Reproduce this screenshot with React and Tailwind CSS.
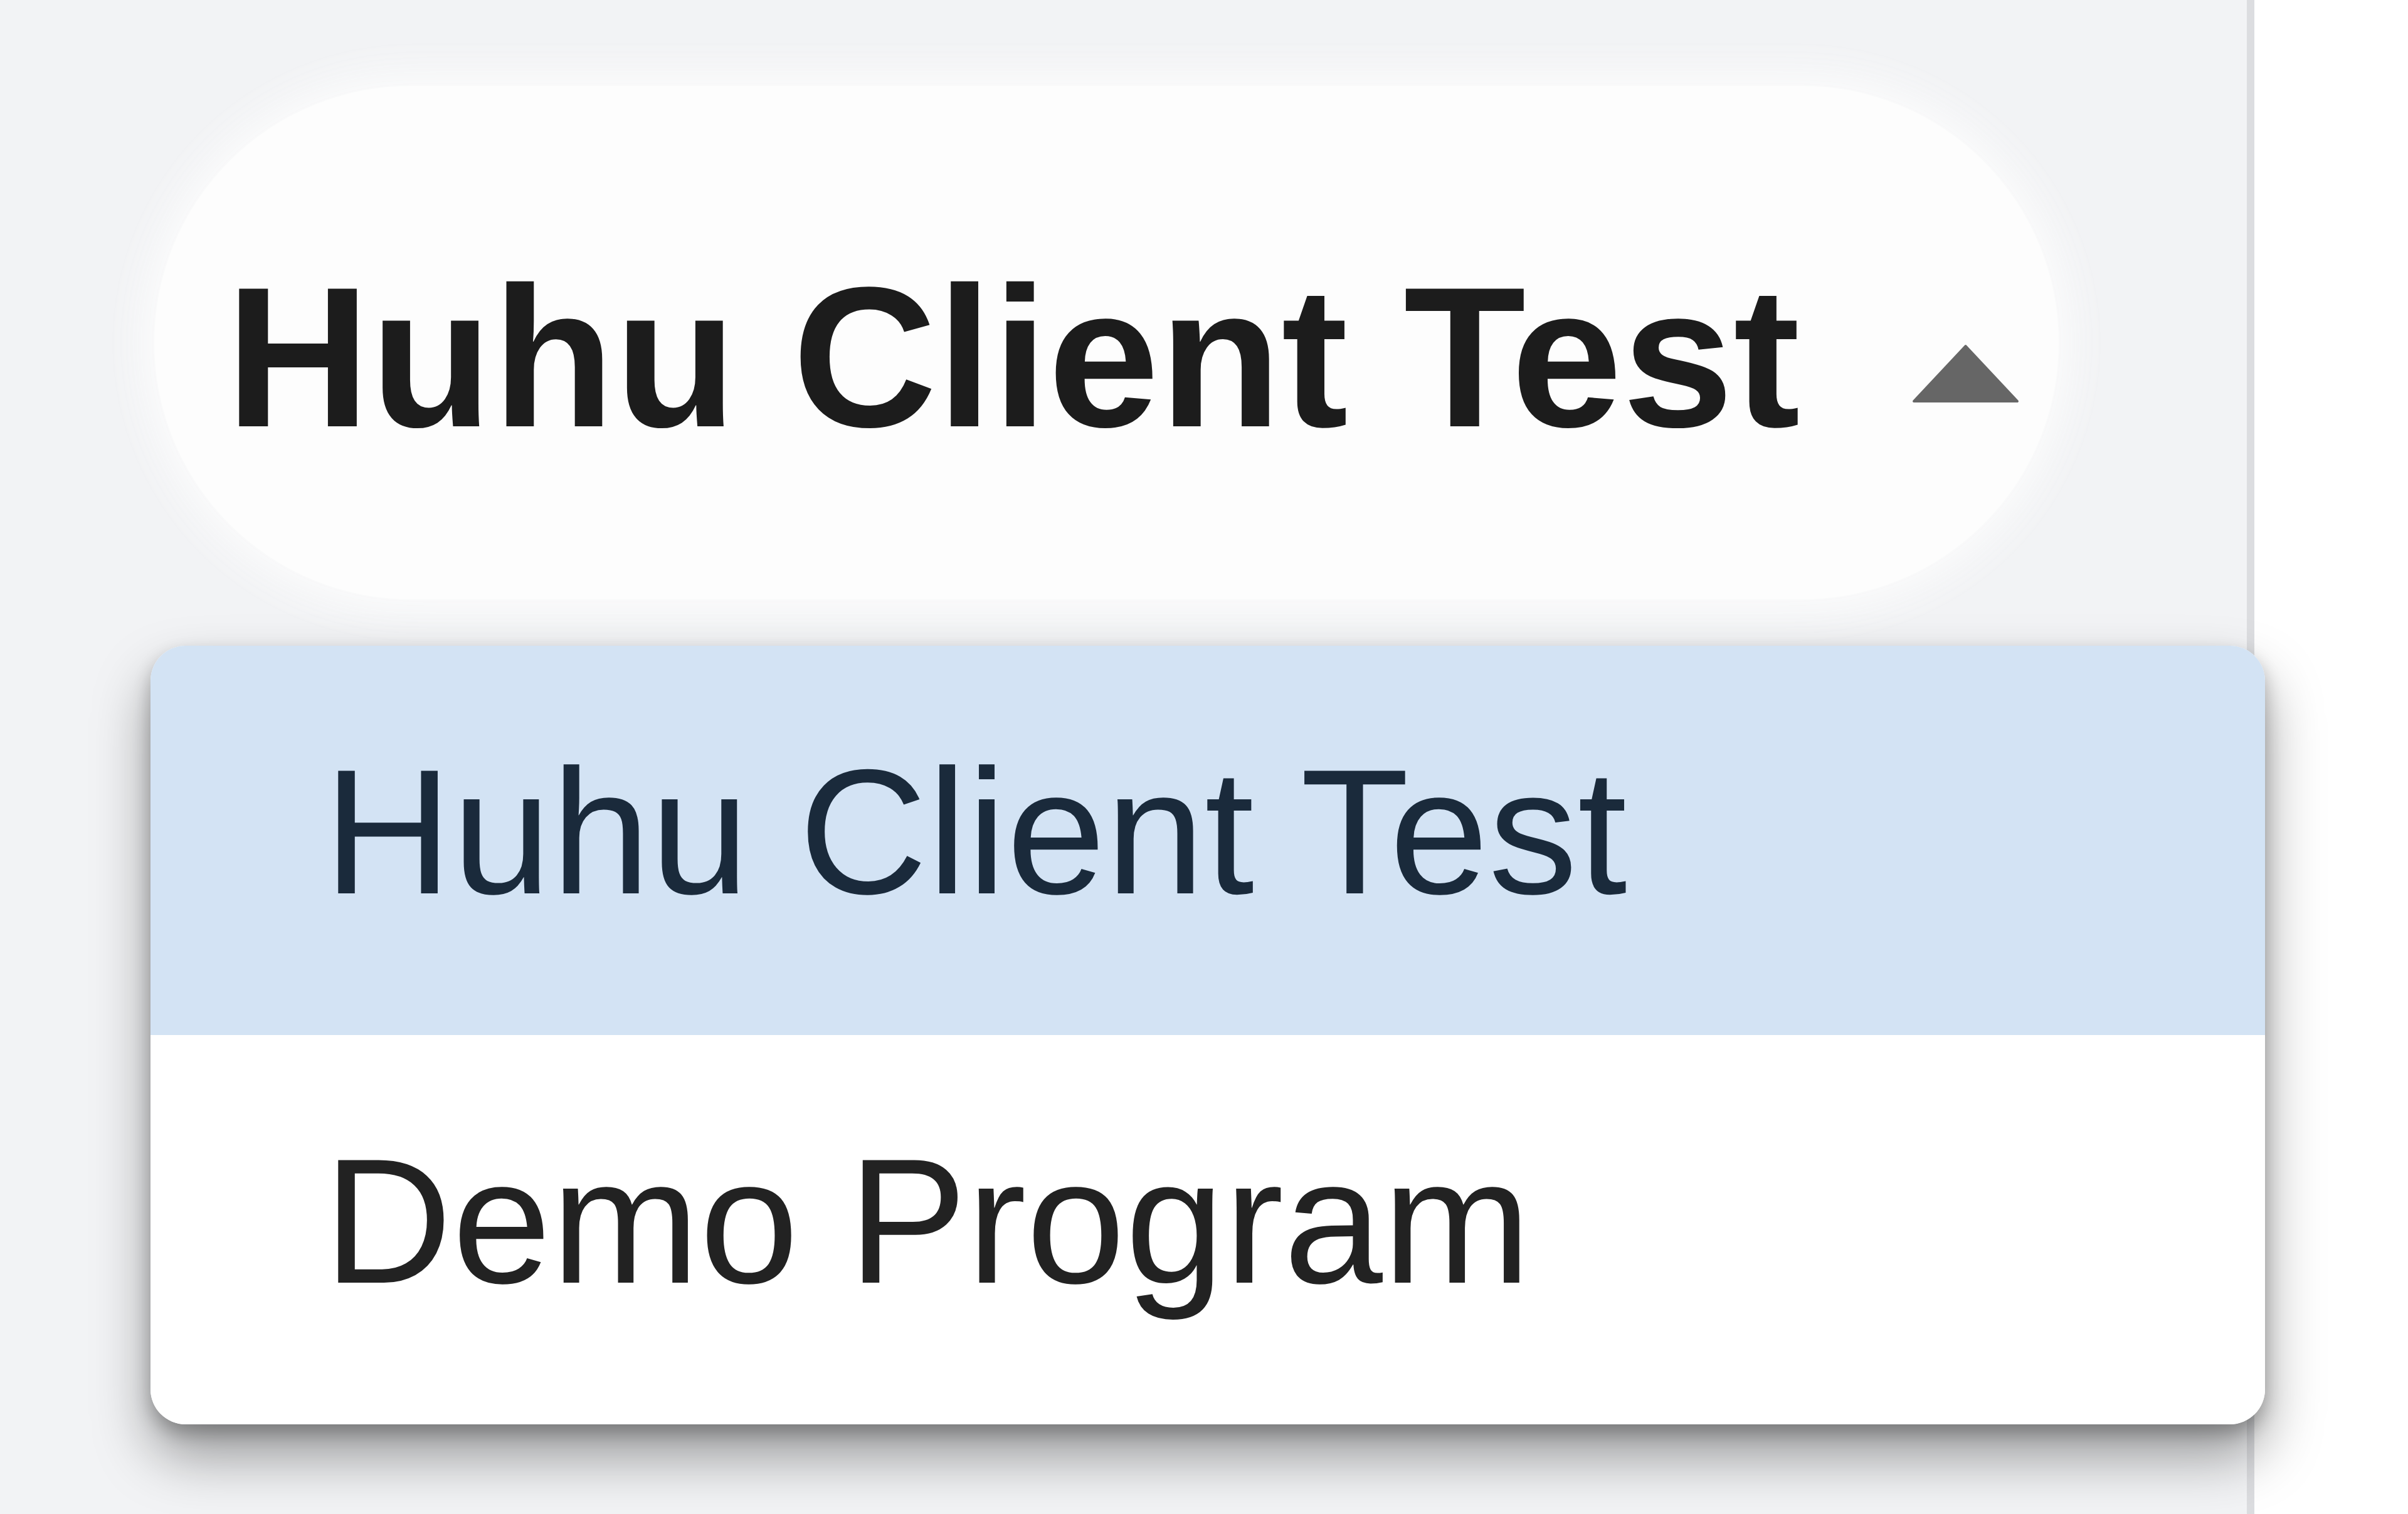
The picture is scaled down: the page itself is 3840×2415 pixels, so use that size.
const programs = ['Huhu Client Test', 'Demo Program'];

const Caret = () => (
  <svg width="171" height="93" viewBox="0 0 171 93" className="mt-[52px] ml-[178px] shrink-0">
    <polygon points="85.5,3 168,91 3,91" fill="#666666" stroke="#666666" strokeWidth="4" strokeLinejoin="round" />
  </svg>
);

const ProgramSwitcher = ({ selected }) => (
  <div className="flex flex-col items-start">
    {/* Trigger */}
    <button className="flex items-center w-[3037px] ml-[10px] pl-[114px] pt-[273px] pb-[227px] rounded-full bg-[#fdfdfd] shadow-[0_0_70px_16px_rgba(253,253,253,0.95)]">
      <span className="text-[319px] leading-none font-bold text-[#1c1c1c] whitespace-nowrap">{selected}</span>
      <Caret />
    </button>

    {/* Menu */}
    <div className="relative z-10 mt-[74px] ml-[4px] w-[3372px] rounded-[56px] bg-white overflow-hidden shadow-[0_50px_90px_rgba(0,0,0,0.38),0_14px_28px_rgba(0,0,0,0.24)]">
      {programs.map((p) => (
        <div
          key={p}
          className={`pl-[276px] pt-[155px] pb-[182px] text-[284px] leading-none whitespace-nowrap ${
            p === selected ? 'bg-[#d3e3f4] text-[#1a2a3b]' : 'bg-white text-[#222222]'
          }`}
        >
          {p}
        </div>
      ))}
    </div>
  </div>
);

export default function App() {
  return (
    <div className="flex w-[3840px] h-[2415px] overflow-hidden font-['Liberation_Sans',Arial,sans-serif]">
      <main className="w-[3583px] shrink-0 bg-[#f2f3f5] pl-[236px] pt-[137px]">
        <ProgramSwitcher selected="Huhu Client Test" />
      </main>
      <div className="w-[12px] shrink-0 bg-[#dcdde0]" />
      <aside className="flex-1 bg-white" />
    </div>
  );
}
